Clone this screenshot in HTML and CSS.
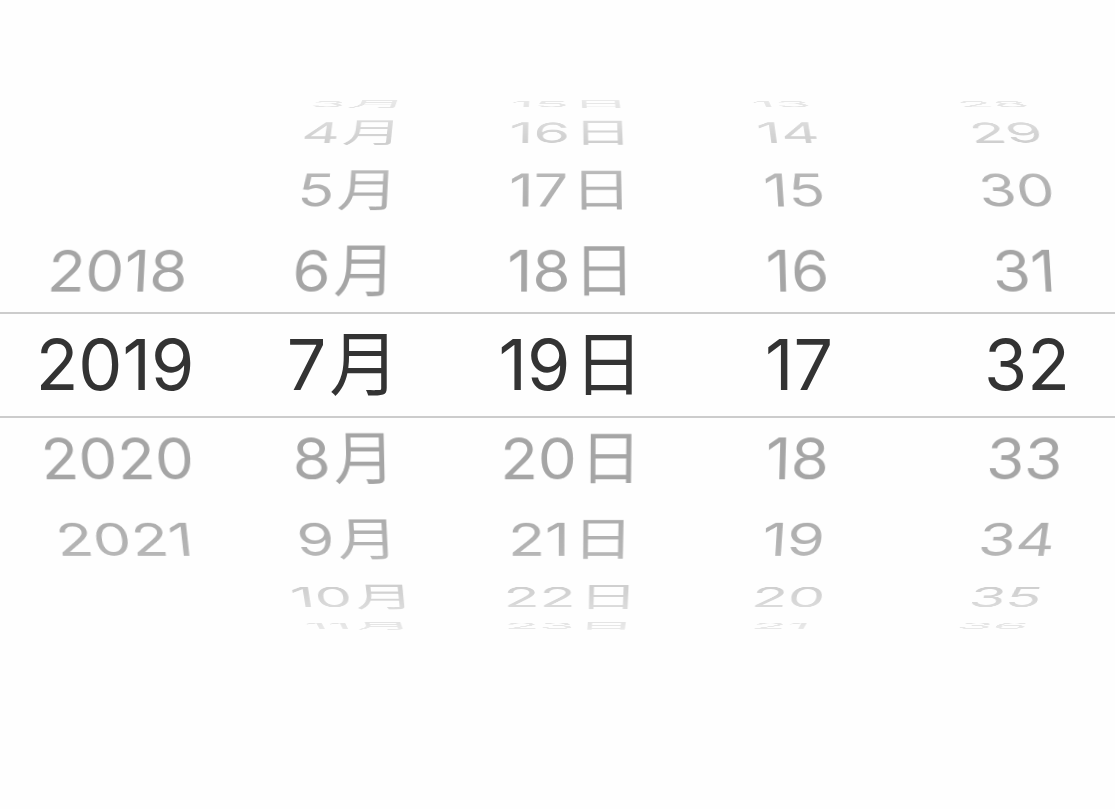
FILE: index.html
```html
<!DOCTYPE html>
<html lang="zh-CN">
<head>
<meta charset="utf-8">
<meta name="viewport" content="width=device-width, initial-scale=1">
<title>2019年7月19日 17:32</title>
<link rel="stylesheet" href="styles.css">
</head>
<body>
<main class="picker">
  <div class="drum">
    <div class="wheel" role="radiogroup" aria-label="年">
      <label class="item up-1"><input type="radio" name="year">2018</label>
      <label class="item current"><input type="radio" name="year" checked>2019</label>
      <label class="item down-1"><input type="radio" name="year">2020</label>
      <label class="item down-2"><input type="radio" name="year">2021</label>
    </div>
    <div class="wheel" role="radiogroup" aria-label="月">
      <label class="item up-4"><input type="radio" name="month">3<span class="unit">月</span></label>
      <label class="item up-3"><input type="radio" name="month">4<span class="unit">月</span></label>
      <label class="item up-2"><input type="radio" name="month">5<span class="unit">月</span></label>
      <label class="item up-1"><input type="radio" name="month">6<span class="unit">月</span></label>
      <label class="item current"><input type="radio" name="month" checked>7<span class="unit">月</span></label>
      <label class="item down-1"><input type="radio" name="month">8<span class="unit">月</span></label>
      <label class="item down-2"><input type="radio" name="month">9<span class="unit">月</span></label>
      <label class="item down-3"><input type="radio" name="month">10<span class="unit">月</span></label>
      <label class="item down-4"><input type="radio" name="month">11<span class="unit">月</span></label>
    </div>
    <div class="wheel" role="radiogroup" aria-label="日">
      <label class="item up-4"><input type="radio" name="day">15<span class="unit">日</span></label>
      <label class="item up-3"><input type="radio" name="day">16<span class="unit">日</span></label>
      <label class="item up-2"><input type="radio" name="day">17<span class="unit">日</span></label>
      <label class="item up-1"><input type="radio" name="day">18<span class="unit">日</span></label>
      <label class="item current"><input type="radio" name="day" checked>19<span class="unit">日</span></label>
      <label class="item down-1"><input type="radio" name="day">20<span class="unit">日</span></label>
      <label class="item down-2"><input type="radio" name="day">21<span class="unit">日</span></label>
      <label class="item down-3"><input type="radio" name="day">22<span class="unit">日</span></label>
      <label class="item down-4"><input type="radio" name="day">23<span class="unit">日</span></label>
    </div>
    <div class="wheel" role="radiogroup" aria-label="时">
      <label class="item up-4"><input type="radio" name="hour">13</label>
      <label class="item up-3"><input type="radio" name="hour">14</label>
      <label class="item up-2"><input type="radio" name="hour">15</label>
      <label class="item up-1"><input type="radio" name="hour">16</label>
      <label class="item current"><input type="radio" name="hour" checked>17</label>
      <label class="item down-1"><input type="radio" name="hour">18</label>
      <label class="item down-2"><input type="radio" name="hour">19</label>
      <label class="item down-3"><input type="radio" name="hour">20</label>
      <label class="item down-4"><input type="radio" name="hour">21</label>
    </div>
    <div class="wheel" role="radiogroup" aria-label="分">
      <label class="item up-4"><input type="radio" name="minute">28</label>
      <label class="item up-3"><input type="radio" name="minute">29</label>
      <label class="item up-2"><input type="radio" name="minute">30</label>
      <label class="item up-1"><input type="radio" name="minute">31</label>
      <label class="item current"><input type="radio" name="minute" checked>32</label>
      <label class="item down-1"><input type="radio" name="minute">33</label>
      <label class="item down-2"><input type="radio" name="minute">34</label>
      <label class="item down-3"><input type="radio" name="minute">35</label>
      <label class="item down-4"><input type="radio" name="minute">36</label>
    </div>
  </div>
</main>
</body>
</html>
```

FILE: styles.css
```css
:root {
  --radius: 290px;
  --row: 102px;
}

* {
  box-sizing: border-box;
}

body {
  margin: 0;
  min-height: 100vh;
  background: #fefefe;
  color: #a5a5a5;
  font-family: Inter, "Noto Sans CJK SC", sans-serif;
}

.picker {
  display: grid;
  align-items: center;
  padding: 94px 0 80px;
}

/* Selection band behind the middle row */
.picker::before {
  content: "";
  grid-area: 1 / 1;
  height: 102px;
  border-top: 2px solid #ccc;
  border-bottom: 2px solid #ccc;
}

/* The five wheels share one vanishing point and fade at both rims */
.drum {
  grid-area: 1 / 1;
  display: grid;
  grid-template-columns: 176fr 280fr 176fr 280fr 176fr;
  padding: 220px 0 220px 27px;
  perspective: 2800px;
  -webkit-mask-image: linear-gradient(rgba(0, 0, 0, .2) 0, rgba(0, 0, 0, .3) 16px, rgba(0, 0, 0, .54) 50px, rgba(0, 0, 0, .83) 86px, #000 150px, #000 392px, rgba(0, 0, 0, .83) 456px, rgba(0, 0, 0, .54) 492px, rgba(0, 0, 0, .3) 526px, rgba(0, 0, 0, .2) 542px);
  mask-image: linear-gradient(rgba(0, 0, 0, .2) 0, rgba(0, 0, 0, .3) 16px, rgba(0, 0, 0, .54) 50px, rgba(0, 0, 0, .83) 86px, #000 150px, #000 392px, rgba(0, 0, 0, .83) 456px, rgba(0, 0, 0, .54) 492px, rgba(0, 0, 0, .3) 526px, rgba(0, 0, 0, .2) 542px);
}

.wheel {
  display: grid;
  transform-style: preserve-3d;
}

.item {
  grid-area: 1 / 1;
  justify-self: center;
  height: var(--row);
  font-size: 62px;
  line-height: var(--row);
  white-space: nowrap;
  cursor: pointer;
  transform: translateZ(calc(var(--radius) * -1)) rotateX(var(--angle)) translateZ(var(--radius));
}

.item input {
  position: absolute;
  margin: 0;
  opacity: 0;
  pointer-events: none;
}

.unit {
  margin-left: 3px;
  font-family: "Noto Sans CJK SC", sans-serif;
  line-height: 1;
}

.current {
  color: #333;
  font-size: 70px;
  transform: none;
}

.up-1 { --angle: 19deg; }
.up-2 { --angle: 38deg; }
.up-3 { --angle: 57deg; }
.up-4 { --angle: 76deg; }
.down-1 { --angle: -19deg; }
.down-2 { --angle: -38deg; }
.down-3 { --angle: -57deg; }
.down-4 { --angle: -76deg; }
```
